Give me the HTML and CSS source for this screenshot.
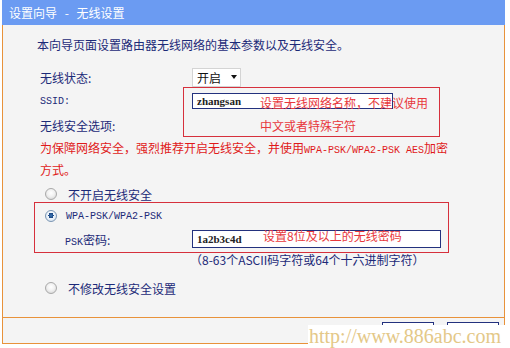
FILE: index.html
```html
<!DOCTYPE html>
<html lang="zh-CN">
<head>
<meta charset="utf-8">
<title>设置向导 - 无线设置</title>
<link rel="stylesheet" href="styles.css">
</head>
<body>
<div class="panel">
  <div class="titlebar">设置向导 - 无线设置</div>
  <div class="content">
    <p class="intro">本向导页面设置路由器无线网络的基本参数以及无线安全。</p>
    <div class="row status">
      <span class="label">无线状态:</span>
      <span class="select"><span class="sel-text">开启</span><i class="caret"></i></span>
    </div>
    <div class="row ssid">
      <span class="label mono">SSID:</span>
      <span class="input ssid-input">zhangsan</span>
    </div>
    <div class="row sec">
      <span class="label">无线安全选项:</span>
    </div>
    <p class="warn">为保障网络安全，强烈推荐开启无线安全，并使用<span class="mono">WPA-PSK/WPA2-PSK AES</span>加密<br>方式。</p>
    <div class="radio-row r1"><span class="radio"></span><span class="rtext">不开启无线安全</span></div>
    <div class="radio-row r2"><span class="radio checked"></span><span class="rtext mono">WPA-PSK/WPA2-PSK</span></div>
    <div class="row psk">
      <span class="label psk-label"><span class="mono">PSK</span>密码:</span>
      <span class="input psk-input">1a2b3c4d</span>
    </div>
    <div class="hint">（8-63个ASCII码字符或64个十六进制字符）</div>
    <div class="radio-row r3"><span class="radio"></span><span class="rtext">不修改无线安全设置</span></div>
  </div>
  <div class="footer">
    <span class="btn"></span>
    <span class="btn"></span>
  </div>

  <div class="note-box box-ssid">
    <span class="note">设置无线网络名称，不建议使用</span>
    <span class="note">中文或者特殊字符</span>
  </div>
  <div class="note-box box-psk"></div>
  <span class="note note-psk">设置8位及以上的无线密码</span>
</div>
<div class="watermark">http://www.886abc.com</div>
</body>
</html>
```

FILE: styles.css
```css
* { box-sizing: border-box; }

html, body {
  margin: 0;
  padding: 0;
  background: #ffffff;
  width: 510px;
  height: 348px;
  overflow: hidden;
}

body {
  position: relative;
  font-family: "Noto Sans CJK SC", "Noto Sans", sans-serif;
  font-size: 12px;
  color: #1c2a78;
}

.mono {
  font-family: "Liberation Mono", "DejaVu Sans Mono", monospace;
  font-size: 10px;
}

.panel {
  position: relative;
  margin-left: 2px;
  width: 503px;
}

.titlebar {
  height: 25px;
  line-height: 25px;
  background: #6b9bf2;
  color: #ffffff;
  padding-left: 7px;
  font-size: 12px;
  word-spacing: 5px;
}

.content {
  height: 292px;
  background: #f4f4f4;
  border-left: 1px solid #e8923a;
  border-right: 1px solid #e8923a;
  padding-left: 34px;
  display: flex;
  flex-direction: column;
}

.intro {
  margin: 0;
  height: 40px;
  line-height: 40px;
}

.row {
  display: flex;
  align-items: center;
  padding-left: 3px;
}

.label {
  width: 152px;
  flex: none;
}

.status { height: 24px; }
.ssid { height: 24px; }
.sec { height: 25px; }

.select {
  display: flex;
  align-items: center;
  flex: none;
  width: 49px;
  height: 19px;
  background: #ffffff;
  border: 1px solid #d4d4d4;
  padding-left: 4px;
  color: #111111;
  font-size: 12px;
  white-space: nowrap;
}

.sel-text { line-height: 17px; }

.caret {
  flex: none;
  margin-left: 10px;
  width: 0;
  height: 0;
  border-left: 3.5px solid transparent;
  border-right: 3.5px solid transparent;
  border-top: 4px solid #111111;
}

.input {
  display: flex;
  align-items: center;
  flex: none;
  background: #ffffff;
  border: 1px solid #23317e;
  padding-left: 4px;
  font-family: "Liberation Serif", serif;
  font-weight: bold;
  font-size: 11px;
  color: #222222;
}

.ssid-input {
  width: 201px;
  height: 16px;
}

.warn {
  margin: 0;
  padding-left: 3px;
  line-height: 19px;
  color: #e01a1a;
}

.radio-row {
  display: flex;
  align-items: center;
  height: 20px;
  padding-left: 8px;
}

.r1 { margin-top: 5px; }
.r2 { margin-top: 2px; }
.r3 { margin-top: 7px; }

.radio {
  flex: none;
  width: 12px;
  height: 12px;
  border-radius: 50%;
  border: 1px solid #a9a9a9;
  background: radial-gradient(circle at 50% 40%, #ffffff 0%, #f1f1f1 45%, #cfcfcf 100%);
}

.radio.checked {
  border-color: #7b96b3;
  background:
    radial-gradient(circle at 50% 45%, #3f78b8 0%, #1d4a86 30%, #1d4a86 34%, rgba(0,0,0,0) 36%),
    radial-gradient(circle at 50% 40%, #ffffff 0%, #e6eef7 60%, #c2d2e3 100%);
}

.r1 .rtext, .r3 .rtext { margin-left: 11px; }
.r2 .rtext { margin-left: 9px; }

.psk {
  margin-top: 3px;
  height: 20px;
  padding-left: 28px;
}

.psk-label { width: 127px; }

.psk-input {
  width: 249px;
  height: 18px;
}

.hint {
  height: 22px;
  line-height: 22px;
  padding-left: 153px;
}

.footer {
  height: 27px;
  background: #f4f4f4;
  border: 1px solid #e8923a;
  display: flex;
  justify-content: flex-end;
  align-items: flex-start;
  gap: 13px;
  padding-top: 4px;
  padding-right: 5px;
}

.btn {
  width: 52px;
  height: 20px;
  border: 1px solid #23317e;
  background: #ffffff;
}

.note-box {
  position: absolute;
  border: 1px solid #d6303c;
}

.box-ssid {
  left: 181px;
  top: 87px;
  width: 257px;
  height: 50px;
  display: flex;
  flex-direction: column;
  padding-left: 76px;
  padding-top: 3px;
}

.box-psk {
  left: 32px;
  top: 202px;
  width: 415px;
  height: 51px;
}

.note {
  color: #e8383c;
  line-height: 23px;
  white-space: nowrap;
  font-size: 12px;
}

.note-psk {
  position: absolute;
  left: 261px;
  top: 226px;
  line-height: 20px;
}

.watermark {
  position: absolute;
  left: 308px;
  top: 325px;
  width: 202px;
  height: 23px;
  background: #ffffff;
  color: #e4c888;
  font-family: "Liberation Serif", serif;
  font-size: 20px;
  line-height: 23px;
  padding-left: 1px;
  white-space: nowrap;
}
```
